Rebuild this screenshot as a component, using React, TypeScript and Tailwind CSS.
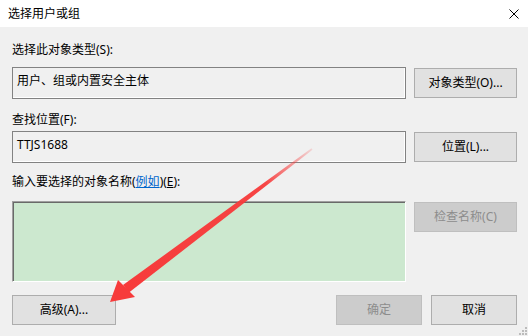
import React from 'react';

const font = { fontFamily: '"Noto Sans", "Noto Sans CJK SC", sans-serif' };

function Btn({ children, disabled = false, className = '' }: { children: React.ReactNode; disabled?: boolean; className?: string }) {
  return (
    <div
      className={`flex items-center justify-center h-[30px] border text-[12px] leading-4 ${
        disabled ? 'bg-[#cccccc] border-[#bfbfbf] text-[#8c8c8c]' : 'bg-[#e1e1e1] border-[#adadad] text-black'
      } ${className}`}
    >
      {children}
    </div>
  );
}

function TextBox({ value }: { value: string }) {
  return (
    <div className="w-[394px] h-[32px] border border-[#828282] shadow-[inset_-1px_-1px_0_#ffffff] pl-[4px] pt-[5px] text-[12px] leading-4 text-black">
      {value}
    </div>
  );
}

export default function App() {
  return (
    <div className="relative w-[528px] h-[336px] bg-[#f0f0f0] overflow-hidden select-none" style={font}>
      {/* title bar */}
      <div className="h-[27px] bg-white flex items-center justify-between pl-[8px] pr-[8px]">
        <span className="text-[12px] leading-4 text-black">选择用户或组</span>
        <svg width="10" height="10" viewBox="0 0 10 10" className="mr-[1px]">
          <path d="M0.5 0.5 L9.5 9.5 M9.5 0.5 L0.5 9.5" stroke="#000" strokeWidth="1" />
        </svg>
      </div>

      <div className="pl-[12px] pr-[11px]">
        <div className="mt-[15px] text-[12px] leading-4 text-black">选择此对象类型(S):</div>
        <div className="mt-[9px] flex items-center gap-[8px]">
          <TextBox value="用户、组或内置安全主体" />
          <Btn className="w-[103px]">对象类型(O)...</Btn>
        </div>

        <div className="mt-[13px] text-[12px] leading-4 text-black">查找位置(F):</div>
        <div className="mt-[3px] flex items-center gap-[8px]">
          <TextBox value="TTJS1688" />
          <Btn className="w-[103px]">位置(L)...</Btn>
        </div>

        <div className="mt-[11px] text-[12px] leading-4 text-black">
          输入要选择的对象名称(<span className="text-[#0066cc] underline">例如</span>)(<span className="underline">E</span>):
        </div>
        <div className="mt-[11px] flex items-start gap-[8px]">
          <div className="w-[394px] h-[81px] bg-[#cce8cf] border border-t-[#a0a0a0] border-l-[#a0a0a0] border-r-white border-b-white shadow-[inset_1px_1px_0_#696969]" />
          <Btn disabled className="w-[103px] mt-[1px]">检查名称(C)</Btn>
        </div>

        <div className="mt-[13px] flex items-center justify-between">
          <Btn className="w-[104px]">高级(A)...</Btn>
          <div className="flex gap-[9px]">
            <Btn disabled className="w-[86px]">确定</Btn>
            <Btn className="w-[86px]">取消</Btn>
          </div>
        </div>
      </div>

      {/* resize grip */}
      <svg width="10" height="10" viewBox="0 0 10 10" className="absolute right-0 bottom-0">
        <rect x="7" y="1" width="2" height="2" fill="#bcbcbc" />
        <rect x="4" y="4" width="2" height="2" fill="#bcbcbc" />
        <rect x="7" y="4" width="2" height="2" fill="#bcbcbc" />
        <rect x="1" y="7" width="2" height="2" fill="#bcbcbc" />
        <rect x="4" y="7" width="2" height="2" fill="#bcbcbc" />
        <rect x="7" y="7" width="2" height="2" fill="#bcbcbc" />
      </svg>

      {/* red annotation arrow */}
      <svg width="528" height="336" viewBox="0 0 528 336" className="absolute inset-0 pointer-events-none">
        <defs>
          <linearGradient id="shaft" x1="126" y1="289" x2="312" y2="149" gradientUnits="userSpaceOnUse">
            <stop offset="0" stopColor="#f73b3b" stopOpacity="1" />
            <stop offset="0.75" stopColor="#f73b3b" stopOpacity="0.95" />
            <stop offset="1" stopColor="#f73b3b" stopOpacity="0.15" />
          </linearGradient>
        </defs>
        <polygon points="129,292.5 123,285 311.5,148.3 312.5,149.7" fill="url(#shaft)" />
        <polygon points="110,302 118,280 135,297" fill="#f73b3b" />
      </svg>
    </div>
  );
}
